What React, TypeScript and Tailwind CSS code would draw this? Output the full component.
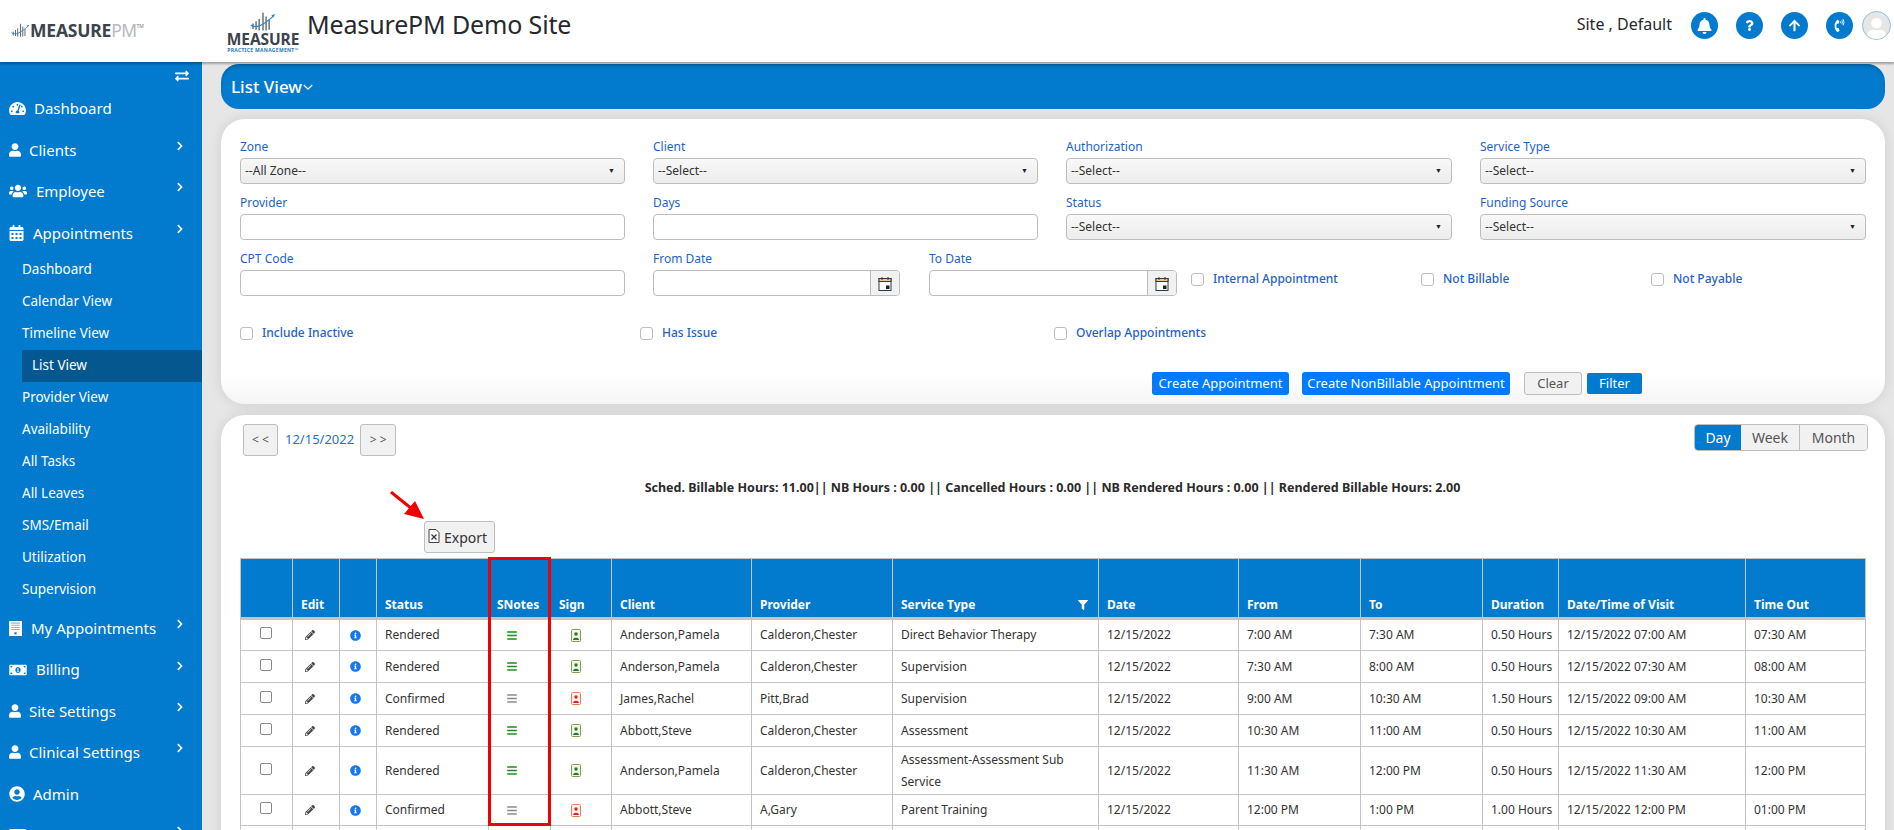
import React from "react";
import { FaTachometerAlt, FaUser, FaUsers, FaCalendarAlt, FaMoneyBillAlt, FaUserCircle, FaCreditCard, FaBell, FaQuestion, FaArrowUp, FaPhoneVolume, FaPencilAlt, FaInfoCircle, FaBars, FaFilter, FaExchangeAlt, FaChevronRight } from "react-icons/fa";

const font = { fontFamily: '"Noto Sans", "Open Sans", sans-serif' };

function BarsMark({ className }: { className: string }) {
  return (
    <svg viewBox="0 0 34 26" className={className}>
      <g stroke="#4a5560" strokeWidth="1.6">
        <path d="M4 22V15M8 23V12M12 24V9M17 24V1M21 24V6M25 23V10" />
      </g>
      <path d="M1 17C8 22 16 18 31 5" stroke="#2f86c9" strokeWidth="1.6" fill="none" />
      <path d="M33 3l-5 1 2 3z" fill="#2f86c9" />
    </svg>
  );
}

function MainItem({ icon, label, chevron = true, gap }: { icon: React.ReactNode; label: string; chevron?: boolean; gap: string }) {
  return (
    <div className="h-[41.4px] flex items-center pl-[9px] pr-[18px] text-[15px] text-white">
      <span className="flex items-center justify-center">{icon}</span>
      <span className={gap}>{label}</span>
      {chevron && <FaChevronRight className="ml-auto mb-2 w-[8px] h-[10px]" />}
    </div>
  );
}

function SubItem({ label, active }: { label: string; active?: boolean }) {
  return active ? (
    <div className="h-[32px] ml-[22px] pl-[10px] flex items-center bg-[#04588f] text-[13.5px] text-white">{label}</div>
  ) : (
    <div className="h-[32px] pl-[22px] flex items-center text-[13.5px] text-white">{label}</div>
  );
}

function Sidebar() {
  return (
    <aside className="w-[202px] shrink-0 bg-[#027acd] h-[768px] overflow-hidden">
      <div className="h-[26px] flex justify-end pr-[12px] pt-[7px]">
        <FaExchangeAlt className="w-[16px] h-[14px] text-white" />
      </div>
      <div className="pt-[0px]">
        <MainItem icon={<FaTachometerAlt className="w-[17px] h-[15px]" />} label="Dashboard" gap="ml-[8px]" chevron={false} />
        <MainItem icon={<FaUser className="w-[12px] h-[14px]" />} label="Clients" gap="ml-[8px]" />
        <MainItem icon={<FaUsers className="w-[18px] h-[16px]" />} label="Employee" gap="ml-[9px]" />
        <MainItem icon={<FaCalendarAlt className="w-[15px] h-[16px]" />} label="Appointments" gap="ml-[9px]" />
      </div>
      <div className="mt-[0px]">
        {["Dashboard", "Calendar View", "Timeline View"].map((s) => <SubItem key={s} label={s} />)}
        <SubItem label="List View" active />
        {["Provider View", "Availability", "All Tasks", "All Leaves", "SMS/Email", "Utilization", "Supervision"].map((s) => <SubItem key={s} label={s} />)}
      </div>
      <div className="mt-[2px]">
        <MainItem icon={<svg viewBox="0 0 12 14" className="w-[13px] h-[15px]"><rect width="12" height="14" fill="#fff" /><path d="M2 2h8M2 4h8M2 6h8M2 8h8" stroke="#7fb9e5" strokeWidth="1" /><rect x="5" y="10.5" width="2" height="2" fill="#027acd" /></svg>} label="My Appointments" gap="ml-[9px]" />
        <MainItem icon={<FaMoneyBillAlt className="w-[18px] h-[14px]" />} label="Billing" gap="ml-[9px]" />
        <MainItem icon={<FaUser className="w-[12px] h-[14px]" />} label="Site Settings" gap="ml-[8px]" />
        <MainItem icon={<FaUser className="w-[12px] h-[14px]" />} label="Clinical Settings" gap="ml-[8px]" />
        <MainItem icon={<FaUserCircle className="w-[16px] h-[16px]" />} label="Admin" gap="ml-[8px]" chevron={false} />
        <MainItem icon={<FaCreditCard className="w-[17px] h-[15px]" />} label="Payroll" gap="ml-[9px]" />
      </div>
    </aside>
  );
}

function RoundIcon({ children }: { children: React.ReactNode }) {
  return <div className="w-[27px] h-[27px] rounded-full bg-[#027acd] flex items-center justify-center text-white">{children}</div>;
}

function Header() {
  return (
    <header className="h-[62px] bg-white flex relative z-10 shadow-[0_2px_2px_rgba(0,0,0,0.3)]">
      <div className="w-[219px] shrink-0 flex items-center pl-[11px] pb-[1px]">
        <BarsMark className="w-[19px] h-[15px]" />
        <span className="text-[17.5px] font-bold tracking-[-0.2px] text-[#3b444c]">MEASURE</span>
        <span className="text-[17.5px] font-normal tracking-[-0.6px] text-[#b5b9bd]">PM</span>
        <span className="text-[5px] text-[#777] self-start mt-[23px]">TM</span>
      </div>
      <div className="w-[88px] shrink-0 flex flex-col items-center pt-[12px]">
        <BarsMark className="w-[30px] h-[20px]" />
        <span className="text-[15.5px] leading-[15px] font-bold tracking-[-0.1px] text-[#3b444c]">MEASURE</span>
        <span className="text-[5px] leading-[6px] font-bold text-[#2f78b5] tracking-[0.3px] whitespace-nowrap">PRACTICE MANAGEMENT™</span>
      </div>
      <div className="text-[25px] leading-[48px] text-[#25292e] tracking-[-0.15px]">MeasurePM Demo Site</div>
      <div className="ml-auto flex items-start pt-[12px] pr-[3px]">
        <span className="text-[16px] leading-[24px] text-[#25292e] mr-[19px]">Site , Default</span>
        <div className="flex gap-[18px] items-center">
          <RoundIcon><FaBell className="w-[15px] h-[16px]" /></RoundIcon>
          <RoundIcon><FaQuestion className="w-[9px] h-[11px]" /></RoundIcon>
          <RoundIcon><FaArrowUp className="w-[13px] h-[13px]" /></RoundIcon>
          <RoundIcon><FaPhoneVolume className="w-[13px] h-[13px]" /></RoundIcon>
        </div>
        <div className="ml-[9px] w-[29px] h-[29px] -mt-[1px] rounded-full bg-[#e6e6e6] border border-[#8dc0ea] overflow-hidden flex items-end justify-center">
          <FaUser className="w-[19px] h-[21px] text-white" />
        </div>
      </div>
    </header>
  );
}

function Field({ label, children, className = "" }: { label: string; children: React.ReactNode; className?: string }) {
  return (
    <div className={className}>
      <div className="h-[20px] leading-[17px] text-[12px] text-[#1f62c6]">{label}</div>
      {children}
    </div>
  );
}

function SelectBox({ text }: { text: string }) {
  return (
    <div className="h-[26px] rounded-[4px] border border-[#bdbdbd] bg-gradient-to-b from-[#f8f8f8] to-[#ececec] flex items-center pl-[4px] pr-[9px] text-[12px] text-[#333]">
      <span>{text}</span>
      <span className="ml-auto text-[7px] text-[#222]">▼</span>
    </div>
  );
}

function TextBox() {
  return <div className="h-[26px] rounded-[4px] border border-[#bdbdbd] bg-white" />;
}

function DateBox() {
  return (
    <div className="h-[26px] rounded-[4px] border border-[#bdbdbd] bg-white flex justify-end overflow-hidden">
      <div className="w-[29px] bg-[#f1f1f1] border-l border-[#bdbdbd] flex items-center justify-center">
        <svg viewBox="0 0 14 15" className="w-[14px] h-[15px]">
          <rect x="1" y="2.5" width="12" height="12" fill="#fff" stroke="#2c3a44" />
          <rect x="1" y="2.5" width="12" height="3" fill="#f0c98e" stroke="#2c3a44" />
          <path d="M4 1v3M10 1v3" stroke="#2c3a44" />
          <rect x="8" y="9.5" width="3.5" height="3.5" fill="#222" />
        </svg>
      </div>
    </div>
  );
}

function Check({ label, className = "" }: { label: string; className?: string }) {
  return (
    <div className={`flex items-center ${className}`}>
      <div className="w-[13px] h-[13px] rounded-[3px] border border-[#bdbdbd] bg-white mr-[9px] shrink-0" />
      <span className="text-[12px] text-[#1f62c6] font-medium">{label}</span>
    </div>
  );
}

function FilterPanel() {
  return (
    <section className="mt-[10px] h-[285px] rounded-[24px] bg-gradient-to-b from-white from-90% to-[#f5f5f5] shadow-[0_0_14px_rgba(0,0,0,0.1)] pt-[19px] pl-[19px]">
      <div className="grid grid-cols-[385px_385px_386px_386px] gap-x-[28px] gap-y-[10px]">
        <Field label="Zone"><SelectBox text="--All Zone--" /></Field>
        <Field label="Client"><SelectBox text="--Select--" /></Field>
        <Field label="Authorization"><SelectBox text="--Select--" /></Field>
        <Field label="Service Type"><SelectBox text="--Select--" /></Field>
        <Field label="Provider"><TextBox /></Field>
        <Field label="Days"><TextBox /></Field>
        <Field label="Status"><SelectBox text="--Select--" /></Field>
        <Field label="Funding Source"><SelectBox text="--Select--" /></Field>
      </div>
      <div className="flex mt-[10px]">
        <Field label="CPT Code" className="w-[385px] shrink-0"><TextBox /></Field>
        <Field label="From Date" className="w-[247px] ml-[28px] shrink-0"><DateBox /></Field>
        <Field label="To Date" className="w-[248px] ml-[29px] shrink-0"><DateBox /></Field>
        <div className="flex pt-[20px] h-[34px] items-start">
          <Check label="Internal Appointment" className="ml-[14px] w-[230px]" />
          <Check label="Not Billable" className="w-[230px]" />
          <Check label="Not Payable" />
        </div>
      </div>
      <div className="flex mt-[27px] h-[20px]">
        <Check label="Include Inactive" className="w-[400px]" />
        <Check label="Has Issue" className="w-[414px]" />
        <Check label="Overlap Appointments" />
      </div>
      <div className="flex items-center mt-[29px] ml-[912px] text-[13px]">
        <div className="w-[137px] h-[23px] rounded-[3px] bg-[#007bff] text-white flex items-center justify-center">Create Appointment</div>
        <div className="w-[208px] h-[23px] ml-[13px] rounded-[3px] bg-[#007bff] text-white flex items-center justify-center">Create NonBillable Appointment</div>
        <div className="w-[58px] h-[23px] ml-[14px] rounded-[3px] bg-[#f1f1f1] border border-[#bdbdbd] text-[#555] flex items-center justify-center">Clear</div>
        <div className="w-[55px] h-[21px] ml-[5px] rounded-[2px] bg-[#027acd] text-white flex items-center justify-center">Filter</div>
      </div>
    </section>
  );
}

const G = "#1f8a1f";
const rows = [
  { s: "Rendered", on: true, c: "Anderson,Pamela", p: "Calderon,Chester", t: "Direct Behavior Therapy", f: "7:00 AM", o: "7:30 AM", d: "0.50 Hours", v: "12/15/2022 07:00 AM", x: "07:30 AM", h: "h-[32px]" },
  { s: "Rendered", on: true, c: "Anderson,Pamela", p: "Calderon,Chester", t: "Supervision", f: "7:30 AM", o: "8:00 AM", d: "0.50 Hours", v: "12/15/2022 07:30 AM", x: "08:00 AM", h: "h-[32px]" },
  { s: "Confirmed", on: false, c: "James,Rachel", p: "Pitt,Brad", t: "Supervision", f: "9:00 AM", o: "10:30 AM", d: "1.50 Hours", v: "12/15/2022 09:00 AM", x: "10:30 AM", h: "h-[32px]" },
  { s: "Rendered", on: true, c: "Abbott,Steve", p: "Calderon,Chester", t: "Assessment", f: "10:30 AM", o: "11:00 AM", d: "0.50 Hours", v: "12/15/2022 10:30 AM", x: "11:00 AM", h: "h-[32px]" },
  { s: "Rendered", on: true, c: "Anderson,Pamela", p: "Calderon,Chester", t: "Assessment-Assessment Sub Service", f: "11:30 AM", o: "12:00 PM", d: "0.50 Hours", v: "12/15/2022 11:30 AM", x: "12:00 PM", h: "h-[48px]" },
  { s: "Confirmed", on: false, c: "Abbott,Steve", p: "A,Gary", t: "Parent Training", f: "12:00 PM", o: "1:00 PM", d: "1.00 Hours", v: "12/15/2022 12:00 PM", x: "01:00 PM", h: "h-[31px]" },
];
const widths = ["w-[52px]", "w-[47px]", "w-[37px]", "w-[112px]", "w-[62px]", "w-[61px]", "w-[140px]", "w-[141px]", "w-[206px]", "w-[140px]", "w-[122px]", "w-[122px]", "w-[76px]", "w-[187px]", "w-[120px]"];
const heads = ["", "Edit", "", "Status", "SNotes", "Sign", "Client", "Provider", "Service Type", "Date", "From", "To", "Duration", "Date/Time of Visit", "Time Out"];

function SignIcon({ on }: { on: boolean }) {
  const c = on ? "#1c7d1c" : "#e8211d";
  const edge = on ? "#8a9a4a" : "#f07a50";
  return (
    <svg viewBox="0 0 10 13" className="w-[10px] h-[13px]">
      <rect x="0.5" y="0.5" width="9" height="12" rx="1" fill="#f4f4ee" stroke={edge} />
      <circle cx="5" cy="5" r="1.7" fill={c} />
      <path d="M2 11c0-3 6-3 6 0z" fill={c} />
    </svg>
  );
}

function Table() {
  const td = "border border-[#c4c4c4] px-2 text-[12px] text-[#333] align-middle";
  return (
    <div className="relative mt-[5px] w-[1625px]">
      <table className="table-fixed w-[1625px] border-collapse">
        <colgroup>{widths.map((w, i) => <col key={i} className={w} />)}</colgroup>
        <thead>
          <tr className="h-[60px]">
            {heads.map((h, i) => (
              <th key={i} className="bg-[#027acd] border border-[#c4c4c4] border-b-[3px] px-2 pb-[3px] align-bottom text-left text-[12px] font-bold text-white whitespace-nowrap">
                {i === 8 ? (
                  <span className="flex items-center justify-between pr-[2px]">{h}<FaFilter className="w-[10px] h-[10px]" /></span>
                ) : h}
              </th>
            ))}
          </tr>
        </thead>
        <tbody>
          {rows.map((r, i) => (
            <tr key={i} className={r.h}>
              <td className={td}><div className="ml-[11px] mb-[4px] w-[12px] h-[12px] rounded-[2px] border border-[#8a8a8a] bg-white" /></td>
              <td className={td}><FaPencilAlt className="ml-[4px] w-[10px] h-[10px] text-[#444]" /></td>
              <td className={td}><FaInfoCircle className="ml-[2px] w-[11px] h-[11px] text-[#1477f0]" /></td>
              <td className={td}>{r.s}</td>
              <td className={td}><FaBars className="ml-[9px] w-[12px] h-[11px]" style={{ color: r.on ? G : "#8a8a8a" }} /></td>
              <td className={`${td} pl-[20px]`}><SignIcon on={r.on} /></td>
              <td className={`${td} text-[#2b7cf0]`}>{r.c}</td>
              <td className={td}>{r.p}</td>
              <td className={`${td} leading-[22px]`}>{r.t}</td>
              <td className={td}>12/15/2022</td>
              <td className={td}>{r.f}</td>
              <td className={td}>{r.o}</td>
              <td className={`${td} whitespace-nowrap`}>{r.d}</td>
              <td className={`${td} whitespace-nowrap`}>{r.v}</td>
              <td className={td}>{r.x}</td>
            </tr>
          ))}
          <tr className="h-[32px]">{heads.map((_, i) => <td key={i} className={td} />)}</tr>
        </tbody>
      </table>
      <div className="absolute left-[248px] -top-[1px] w-[63px] h-[269px] border-[3px] border-[#f00000] pointer-events-none" />
    </div>
  );
}

function ListPanel() {
  return (
    <section className="mt-[11px] h-[500px] rounded-t-[24px] bg-white shadow-[0_0_14px_rgba(0,0,0,0.1)] pt-[9px] pl-[19px] overflow-hidden">
      <div className="flex items-center h-[32px]">
        <div className="ml-[3px] w-[35px] h-[32px] rounded-[3px] bg-[#f1f1f1] border border-[#bdbdbd] flex items-center justify-center text-[12px] text-[#555]">&lt; &lt;</div>
        <div className="ml-[7px] text-[13px] text-[#1f72c8]">12/15/2022</div>
        <div className="ml-[6px] w-[36px] h-[32px] rounded-[3px] bg-[#f1f1f1] border border-[#bdbdbd] flex items-center justify-center text-[12px] text-[#555]">&gt; &gt;</div>
        <div className="ml-auto mr-[17px] -mt-[5px] flex h-[27px] rounded-[4px] border border-[#bdbdbd] overflow-hidden text-[14px]">
          <div className="w-[46px] bg-[#027acd] text-white flex items-center justify-center">Day</div>
          <div className="w-[59px] bg-[#f1f1f1] border-r border-[#bdbdbd] text-[#555] flex items-center justify-center">Week</div>
          <div className="w-[67px] bg-[#f1f1f1] text-[#555] flex items-center justify-center">Month</div>
        </div>
      </div>
      <div className="mt-[22px] w-[1625px] text-center text-[12.5px] leading-[20px] font-bold text-[#2b2b2b]">
        Sched. Billable Hours: 11.00|| NB Hours : 0.00 || Cancelled Hours : 0.00 || NB Rendered Hours : 0.00 || Rendered Billable Hours: 2.00
      </div>
      <div className="relative mt-[23px] ml-[184px] w-[71px] h-[32px] rounded-[3px] bg-[#f1f1f1] border border-[#bdbdbd] flex items-center pl-[3px] text-[14px] text-[#333]">
        <svg viewBox="0 0 12 14" className="w-[12px] h-[14px] mr-[4px] mb-[3px]">
          <path d="M1 .5h7l3 3v10H1z" fill="#fff" stroke="#444" />
          <path d="M3.5 5.5l5 5M8.5 5.5l-5 5" stroke="#333" strokeWidth="1.2" />
        </svg>
        Export
        <svg viewBox="0 0 36 30" className="absolute -left-[35px] -top-[31px] w-[36px] h-[30px]">
          <path d="M1 1L22 18" stroke="#f00000" strokeWidth="3" />
          <path d="M34 28L14 23L25 10z" fill="#f00000" />
        </svg>
      </div>
      <Table />
    </section>
  );
}

export default function App() {
  return (
    <div className="w-[1894px] h-[830px] overflow-hidden bg-[#e9e9e9]" style={font}>
      <Header />
      <div className="flex">
        <Sidebar />
        <main className="w-[1692px] h-[768px] pl-[19px] pr-[9px] pt-[2px] bg-[#e6e6e6] overflow-hidden">
          <div className="h-[45px] rounded-[18px] bg-[#027acd] shadow-[inset_0_4px_4px_-2px_rgba(0,0,0,0.2)] flex items-center pl-[10px] text-[17px] font-medium text-white">
            List View
            <svg viewBox="0 0 12 8" className="w-[10px] h-[7px] ml-[1px] mt-[2px]"><path d="M1 1l5 5 5-5" stroke="#fff" strokeWidth="1.6" fill="none" /></svg>
          </div>
          <FilterPanel />
          <ListPanel />
        </main>
      </div>
    </div>
  );
}
